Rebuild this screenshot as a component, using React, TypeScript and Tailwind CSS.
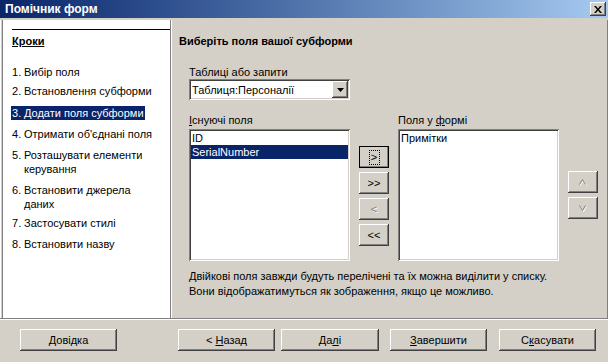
import React from "react";

const raised =
  "shadow-[inset_-1px_-1px_#404040,inset_1px_1px_#ffffff,inset_-2px_-2px_#808080,inset_2px_2px_#d4d0c8]";
const sunken =
  "shadow-[inset_1px_1px_#808080,inset_-1px_-1px_#ffffff,inset_2px_2px_#404040,inset_-2px_-2px_#d4d0c8]";

function Btn({
  children,
  w = "w-[30px]",
  disabled = false,
  extra = "",
}: {
  children: React.ReactNode;
  w?: string;
  disabled?: boolean;
  extra?: string;
}) {
  return (
    <div
      className={`${w} h-[22px] bg-[#d4d0c8] ${raised} flex items-center justify-center ${
        disabled ? "text-[#808080] [text-shadow:1px_1px_0_#ffffff]" : "text-black"
      } ${extra}`}
    >
      {children}
    </div>
  );
}

function Chevron({ up }: { up: boolean }) {
  const d = up ? "M0.5 5.5 L3.5 0.5 L6.5 5.5" : "M0.5 0.5 L3.5 5.5 L6.5 0.5";
  return (
    <svg width="8" height="7" viewBox="0 0 8 7">
      <path d={d} transform="translate(1 1)" stroke="#ffffff" strokeWidth="1" fill="none" />
      <path d={d} stroke="#808080" strokeWidth="1" fill="none" />
    </svg>
  );
}

function Step({
  n,
  lines,
  active = false,
  mt,
}: {
  n: string;
  lines: string[];
  active?: boolean;
  mt: string;
}) {
  return (
    <div className={`${mt} flex`}>
      <div
        className={`flex -ml-[1px] pl-[1px] pr-[1px] ${
          active ? "bg-[#0a246a] text-white" : "text-black"
        }`}
      >
        <span className="w-[12px] shrink-0">{n}.</span>
        <div className="flex flex-col">
          {lines.map((l) => (
            <span key={l} className="whitespace-nowrap">
              {l}
            </span>
          ))}
        </div>
      </div>
    </div>
  );
}

export default function App() {
  return (
    <div className="w-[608px] h-[362px] bg-[#d4d0c8] flex flex-col overflow-hidden [font-family:'Liberation_Sans',Arial,sans-serif] text-[11px] leading-[14px] text-black">
      {/* Title bar */}
      <div className="h-[18px] shrink-0 flex items-center bg-gradient-to-r from-[#0a246a] to-[#a6caf0]">
        <span className="pl-[5px] text-white font-bold text-[12px] leading-[18px]">
          Помічник форм
        </span>
        <div
          className={`ml-auto mr-[2px] w-[16px] h-[14px] bg-[#d4d0c8] ${raised} flex items-center justify-center`}
        >
          <svg width="8" height="7" viewBox="0 0 8 7">
            <path d="M0 0h2l2 2.5L6 0h2L5 3.5 8 7H6L4 4.5 2 7H0l3-3.5z" fill="#000" />
          </svg>
        </div>
      </div>

      {/* Body */}
      <div className="h-[300px] shrink-0 flex pt-[2px]">
        <div className="w-px bg-[#ffffff]" />
        <div className="w-px" />
        {/* Left steps panel */}
        <div className="w-[168px] bg-white border-l border-[#808080] flex flex-col">
          <div className="ml-[9px] mt-[9px] h-px bg-black" />
          <div className="pl-[9px] mt-[4px] font-bold underline">Кроки</div>
          <div className="pl-[9px] flex flex-col">
            <Step mt="mt-[17px]" n="1" lines={["Вибір поля"]} />
            <Step mt="mt-[5px]" n="2" lines={["Встановлення субформи"]} />
            <Step mt="mt-[8px]" n="3" lines={["Додати поля субформи"]} active />
            <Step mt="mt-[7px]" n="4" lines={["Отримати об'єднані поля"]} />
            <Step mt="mt-[7px]" n="5" lines={["Розташувати елементи", "керування"]} />
            <Step mt="mt-[7px]" n="6" lines={["Встановити джерела", "даних"]} />
            <Step mt="mt-[5px]" n="7" lines={["Застосувати стилі"]} />
            <Step mt="mt-[7px]" n="8" lines={["Встановити назву"]} />
          </div>
        </div>
        <div className="w-px bg-[#808080]" />
        <div className="w-px bg-white" />

        {/* Right content */}
        <div className="flex-1 flex flex-col pl-[17px] pt-[14px] border-r border-[#808080]">
          <div className="-ml-[10px] font-bold">Виберіть поля вашої субформи</div>
          <div className="mt-[17px]">Таблиці або запити</div>
          <div className={`w-[161px] h-[21px] bg-white ${sunken} flex items-center pl-[3px] pr-[2px]`}>
            <span className="flex-1">Таблиця:Персоналії</span>
            <div className={`w-[16px] h-[17px] bg-[#d4d0c8] ${raised} flex items-center justify-center`}>
              <svg width="7" height="4" viewBox="0 0 7 4">
                <path d="M0 0h7L3.5 4z" fill="#000" />
              </svg>
            </div>
          </div>

          <div className="mt-[13px] grid grid-cols-[161px_30px_161px_30px] gap-x-[9px]">
            <div className="h-[16px]">
              <u>І</u>снуючі поля
            </div>
            <div />
            <div className="h-[16px]">
              Поля у <u>ф</u>ормі
            </div>
            <div />

            <div className={`h-[132px] bg-white ${sunken} p-[2px] flex flex-col`}>
              <div className="h-[14px] pl-[1px]">ID</div>
              <div className="h-[14px] pl-[1px] bg-[#0a246a] text-white">SerialNumber</div>
            </div>
            <div className="flex flex-col gap-[4px] pt-[17px]">
              <Btn extra="outline outline-1 outline-black -outline-offset-1">
                <span className="w-[11px] h-[15px] border border-dotted border-black flex items-center justify-center">
                  &gt;
                </span>
              </Btn>
              <Btn>&gt;&gt;</Btn>
              <Btn disabled>&lt;</Btn>
              <Btn>&lt;&lt;</Btn>
            </div>
            <div className={`h-[132px] bg-white ${sunken} p-[2px] flex flex-col`}>
              <div className="h-[14px] pl-[1px]">Примітки</div>
            </div>
            <div className="flex flex-col gap-[4px] pt-[42px]">
              <Btn disabled>
                <Chevron up />
              </Btn>
              <Btn disabled>
                <Chevron up={false} />
              </Btn>
            </div>
          </div>

          <div className="mt-[8px] leading-[15px]">
            <div>Двійкові поля завжди будуть перелічені та їх можна виділити у списку.</div>
            <div>Вони відображатимуться як зображення, якщо це можливо.</div>
          </div>
        </div>
      </div>

      {/* Separator */}
      <div className="h-[2px] shrink-0 border-t border-[#808080] border-b border-b-white" />

      {/* Footer */}
      <div className="flex pt-[9px] pl-[20px]">
        <Btn w="w-[97px]">
          <span>
            <u>Д</u>овідка
          </span>
        </Btn>
        <Btn w="w-[97px]" extra="ml-[61px]">
          <span>
            &lt; <u>Н</u>азад
          </span>
        </Btn>
        <Btn w="w-[98px]" extra="ml-[6px]">
          <span>
            Да<u>л</u>і
          </span>
        </Btn>
        <Btn w="w-[97px]" extra="ml-[11px]">
          <span>
            <u>З</u>авершити
          </span>
        </Btn>
        <Btn w="w-[97px]" extra="ml-[12px]">
          <span>
            С<u>к</u>асувати
          </span>
        </Btn>
      </div>
    </div>
  );
}
